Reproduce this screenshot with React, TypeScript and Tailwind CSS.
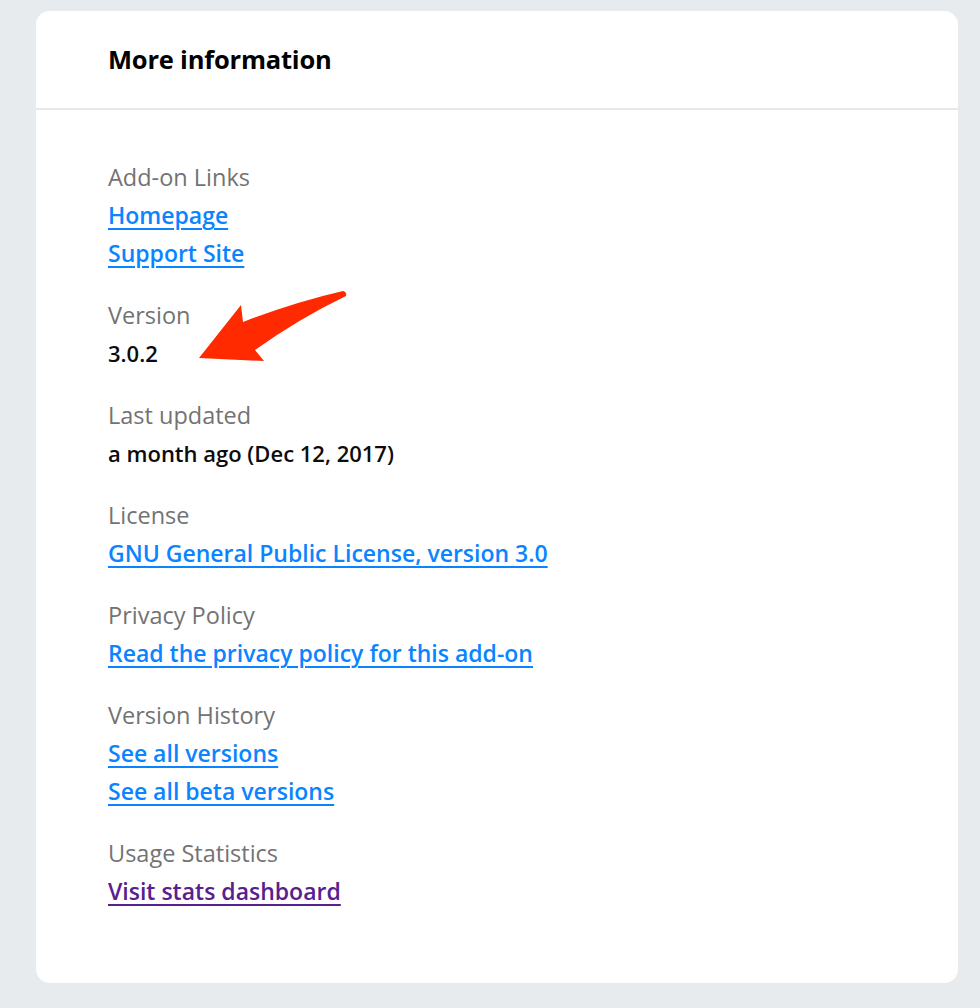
const font = { fontFamily: '"Open Sans", "Noto Sans", sans-serif' };

type Item = { text: string; kind: "link" | "visited" | "plain" };
type Section = { label: string; items: Item[] };

const sections: Section[] = [
  {
    label: "Add-on Links",
    items: [
      { text: "Homepage", kind: "link" },
      { text: "Support Site", kind: "link" },
    ],
  },
  { label: "Version", items: [{ text: "3.0.2", kind: "plain" }] },
  { label: "Last updated", items: [{ text: "a month ago (Dec 12, 2017)", kind: "plain" }] },
  { label: "License", items: [{ text: "GNU General Public License, version 3.0", kind: "link" }] },
  { label: "Privacy Policy", items: [{ text: "Read the privacy policy for this add-on", kind: "link" }] },
  {
    label: "Version History",
    items: [
      { text: "See all versions", kind: "link" },
      { text: "See all beta versions", kind: "link" },
    ],
  },
  { label: "Usage Statistics", items: [{ text: "Visit stats dashboard", kind: "visited" }] },
];

function Value({ item }: { item: Item }) {
  if (item.kind === "plain") {
    return <div className="text-[22px] font-semibold text-[#0c0c0d]">{item.text}</div>;
  }
  const color = item.kind === "visited" ? "text-[#58208f]" : "text-[#0a84ff]";
  return (
    <div className="text-[23px]">
      <a href="#" className={`font-semibold underline decoration-2 underline-offset-[4px] ${color}`}>
        {item.text}
      </a>
    </div>
  );
}

export default function App() {
  return (
    <div className="min-h-[1008px] bg-[#e8ebee] pt-[11px] pl-[36px] pr-[22px]" style={font}>
      <div className="relative rounded-[14px] bg-white">
        <div className="flex h-[99px] items-center border-b-2 border-[#e6e9ec] pl-[72px]">
          <h2 className="text-[25.5px] font-bold tracking-[-0.2px] text-black">More information</h2>
        </div>
        <dl className="pl-[72px] pt-[48px] pb-[49px] leading-[38px]">
          {sections.map((s) => (
            <div key={s.label} className="mb-[24px]">
              <dt className="text-[23.5px] text-[#737373]">{s.label}</dt>
              <dd>
                {s.items.map((it) => (
                  <Value key={it.text} item={it} />
                ))}
              </dd>
            </div>
          ))}
        </dl>

        {/* annotation arrow */}
        <svg
          className="pointer-events-none absolute left-[154px] top-[269px]"
          width="200"
          height="100"
          viewBox="190 280 200 100"
        >
          <path
            d="M343 291 Q347 292 346 296 Q300 318 255 350 L264 361 L199 358 L241 305 L243 322 Q295 302 343 291 Z"
            fill="#ff2a00"
          />
        </svg>
      </div>
    </div>
  );
}
